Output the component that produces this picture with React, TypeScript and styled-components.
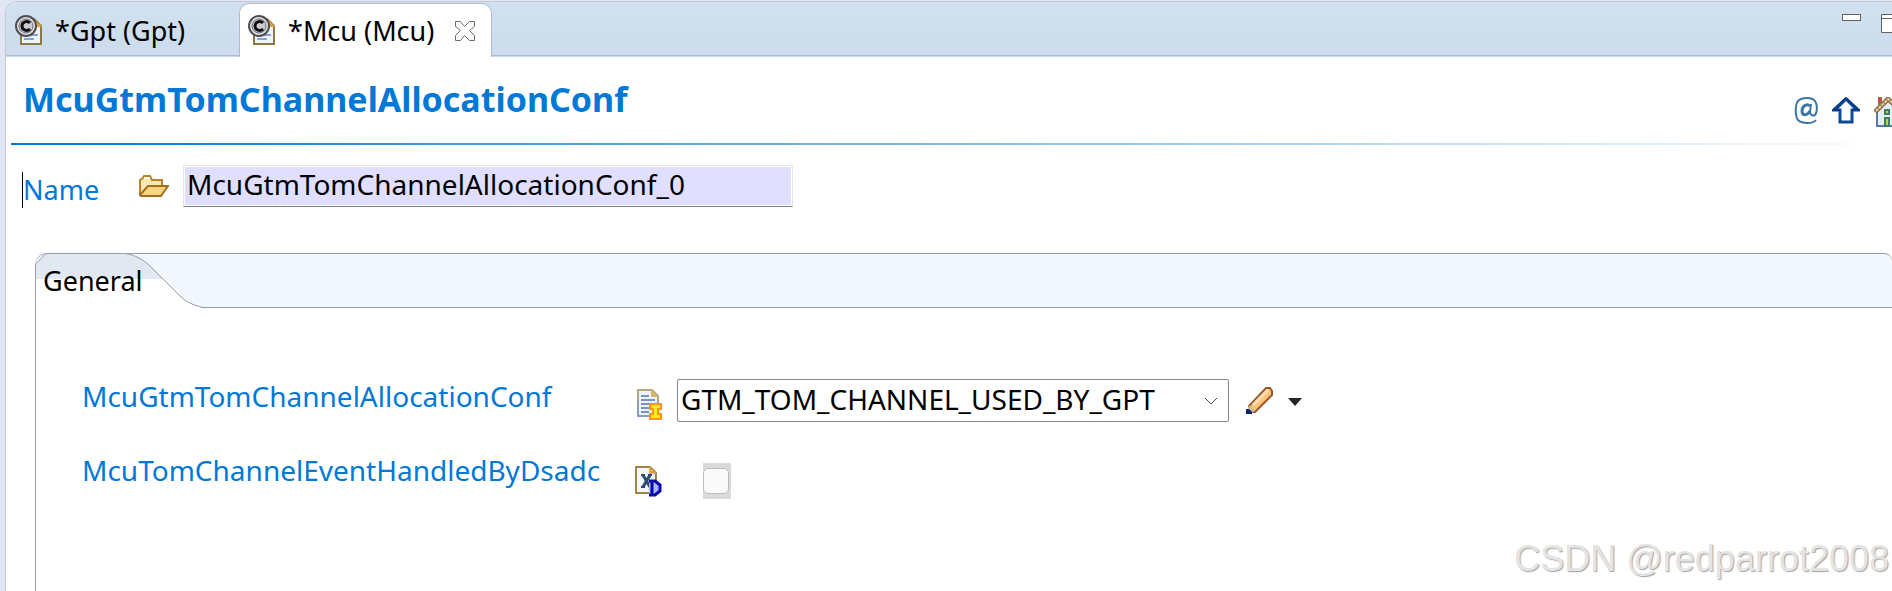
import React from "react";
import styled, { createGlobalStyle } from "styled-components";

const Global = createGlobalStyle`
  *, *::before, *::after { box-sizing: border-box; }
  html, body, #root { height: 100%; margin: 0; }
  body {
    background: #e0e6f6;
    color: #000;
    font-family: "Noto Sans", "Open Sans", sans-serif;
    font-size: 28px;
    line-height: 36px;
    overflow: hidden;
  }
  button, input, select { font: inherit; color: inherit; margin: 0; }
`;

const Editor = styled.main`
  position: relative;
  display: flex;
  flex-direction: column;
  min-height: calc(100vh - 1px);
  margin: 1px 0 0 5px;
  border: 1px solid #c6c9d0;
  border-width: 1px 0 0 1px;
  border-top-left-radius: 12px;
  background: #fff;
  overflow: hidden;
`;

const TabBar = styled.div`
  display: flex;
  height: 55px;
  border-bottom: 1px solid #c9d9e9;
  background: linear-gradient(#d2e1f0, #cddcec);
  box-shadow: inset 0 -1px #b1b9d2;
`;

const TabList = styled.div`
  display: flex;
  flex: 1;
`;

const Tab = styled.div<{ $active?: boolean }>`
  display: flex;
  align-items: center;
  width: ${(p) => (p.$active ? 253 : 233)}px;
  height: 54px;
  padding: 0 8px;
  margin-top: 1px;
  margin-bottom: -1px;
  border: 1px solid ${(p) => (p.$active ? "#b1b9d2" : "transparent")};
  border-bottom: 0;
  border-radius: 10px 10px 0 0;
  background: ${(p) => (p.$active ? "#fff" : "transparent")};
`;

const TabButton = styled.button`
  display: flex;
  align-items: center;
  gap: 12px;
  padding: 0;
  border: 0;
  background: none;
  font-size: 27px;
  white-space: nowrap;
`;

const IconButton = styled.button`
  display: block;
  padding: 0;
  border: 0;
  background: none;
  line-height: 0;
`;

const CloseButton = styled(IconButton)`
  margin-left: auto;
  margin-right: 8px;
`;

const WindowButtons = styled.div`
  display: flex;
  align-items: flex-start;
  gap: 20px;
  padding-top: 12px;
  margin-right: -8px;

  button { height: 20px; }
  svg { display: block; }
`;

const Header = styled.header`
  display: flex;
  align-items: center;
  justify-content: space-between;
  height: 86px;
  padding: 0 0 2px 17px;
`;

const Title = styled.h1`
  margin: 0;
  color: #0078d7;
  font-size: 34px;
  line-height: 48px;
  font-weight: 700;
`;

const HeaderTools = styled.div`
  display: flex;
  align-items: flex-start;
  gap: 14px;
  padding-top: 26px;
  margin-right: -12px;
`;

const Rule = styled.hr`
  width: 100%;
  height: 2px;
  margin: 0 0 0 5px;
  border: 0;
  background: linear-gradient(90deg, #0078d7, #fff);
`;

const Label = styled.label`
  color: #0078d7;
  white-space: nowrap;
`;

const NameRow = styled.div`
  display: flex;
  align-items: center;
  padding: 19px 0 0 16px;
`;

const NameLabel = styled(Label)`
  width: 117px;
  margin-top: 8px;
  border-left: 1px solid #000;
  font-size: 27px;
`;

const NameInput = styled.input`
  width: 610px;
  height: 42px;
  margin-left: 14px;
  padding: 0 3px 4px;
  border: 1px solid #e6e6e6;
  border-bottom-color: #858585;
  outline: 0;
  background: #e0dfff;
  box-shadow: inset 0 0 0 1px #fff;
`;

const Section = styled.section`
  display: flex;
  flex: 1;
  flex-direction: column;
  margin: 45px 0 0 29px;
`;

const SectionHead = styled.div`
  position: relative;
  height: 55px;
  border: 1px solid #999da3;
  border-width: 1px 0;
  border-radius: 12px 8px 0 0;
  background: #f3f7ff;
`;

const TabShape = styled.svg`
  position: absolute;
  left: 0;
  top: -1px;
`;

const SectionTab = styled.button`
  position: relative;
  padding: 9px 8px;
  border: 0;
  background: none;
  font-size: 27px;
`;

const SectionBody = styled.div`
  display: flex;
  flex: 1;
  flex-direction: column;
  gap: 30px;
  padding: 70px 0 0 46px;
  border-left: 1px solid #999da3;
`;

const Field = styled.div<{ $tall?: boolean }>`
  display: grid;
  grid-template-columns: 553px 42px 1fr;
  align-items: center;
  min-height: ${(p) => (p.$tall ? 58 : 44)}px;
`;

const FieldLabel = styled(Label)`
  align-self: start;
`;

const IconCell = styled.div<{ $low?: boolean }>`
  display: flex;
  justify-content: flex-end;
  width: 27px;
  padding-top: ${(p) => (p.$low ? 8 : 0)}px;
`;

const Control = styled.div`
  display: flex;
  align-items: center;
`;

const SelectBox = styled.div`
  position: relative;
  width: 552px;
  height: 43px;
`;

const Select = styled.select`
  width: 100%;
  height: 100%;
  padding: 0 40px 2px 3px;
  border: 1px solid #858585;
  border-radius: 2px;
  appearance: none;
  background: #fff;
`;

const Chevron = styled.svg`
  position: absolute;
  right: 11px;
  top: 18px;
  pointer-events: none;
`;

const Tools = styled.div`
  display: flex;
  align-items: center;
  gap: 15px;
  margin-left: 17px;
`;

const CheckFrame = styled.div`
  display: flex;
  width: 28px;
  height: 36px;
  margin-left: 26px;
  padding-top: 5px;
  background: #dadada;
`;

const Check = styled.input`
  appearance: none;
  width: 26px;
  height: 26px;
  border: 1px solid #bcbcbc;
  border-radius: 5px;
  background: #fafafa;
`;

const Watermark = styled.div`
  position: absolute;
  right: 3px;
  bottom: 10px;
  color: #e4e4e4;
  font-family: "Liberation Sans", Arial, sans-serif;
  font-size: 36px;
  line-height: 44px;
  text-shadow: 1px 1px 1px #a2a2a2;
`;

const ConfigIcon = () => (
  <svg width="28" height="31" viewBox="0 0 28 31" aria-hidden="true">
    <path d="M6 4H19L26 11V29H6Z" fill="#eef4fb" stroke="#8c7a45" strokeWidth="2" />
    <path d="M18 3L27 12H18Z" fill="#e2a63c" />
    <path d="M12 20H23M9 24H19" stroke="#8aa3d0" strokeWidth="2" />
    <circle cx="11" cy="11" r="10" fill="#e3e4e8" stroke="#4d4f54" strokeWidth="2" />
    <circle cx="11" cy="11" r="7" fill="#c9cbd0" stroke="#6a6c70" />
    <path d="M15 8C12 5 7 7 7 11S12 17 15 14" fill="none" stroke="#111" strokeWidth="3" />
  </svg>
);

const CloseIcon = () => (
  <svg width="20" height="20" viewBox="0 0 20 20" aria-hidden="true">
    <path d="M.5 .5H5.5L9.5 5.5L14.5 .5H19.5V5.5L14.5 9.5L19.5 14.5V19.5H14.5L9.5 14.5L5.5 19.5H.5V14.5L5.5 9.5L.5 5.5Z" fill="#fff" stroke="#6c6c6c" />
  </svg>
);

const MinimizeIcon = () => (
  <svg width="19" height="20" aria-hidden="true">
    <rect x=".5" y=".5" width="18" height="6" fill="#fff" stroke="#626262" />
  </svg>
);

const MaximizeIcon = () => (
  <svg width="19" height="20" aria-hidden="true">
    <path d="M.5 .5H18.5V18.5H.5ZM.5 4.5H18.5" fill="#fff" stroke="#626262" />
  </svg>
);

const AtIcon = () => (
  <svg width="24" height="28" viewBox="0 0 24 28" aria-hidden="true">
    <g fill="none" stroke="#3c76a3" strokeWidth="2">
      <path d="M22 23C19 27 8 27 4 23C1 19 1 8 4 4C8 0 18 0 21 4C24 8 23 16 21 18C19 19 16 18 16 15L17 7" />
      <path d="M16 9C13 6 8 9 8 14C8 19 13 19 16 14" strokeWidth="3" />
    </g>
  </svg>
);

const UpIcon = () => (
  <svg width="28" height="27" viewBox="0 0 28 27" aria-hidden="true">
    <path d="M14 2L25 13H20V25H8V13H3Z" fill="#fff" stroke="#0a4a97" strokeWidth="3" />
    <path d="M14 1L1 13H8M14 1L27 13H20" fill="none" stroke="#063a85" strokeWidth="2" />
  </svg>
);

const HomeIcon = () => (
  <svg width="30" height="30" viewBox="0 0 30 30" aria-hidden="true">
    <path d="M3 13L14 3L27 13V29H3Z" fill="#e6eff9" stroke="#5778b2" strokeWidth="2" />
    <path d="M4 0H8V8H4Z" fill="#b4584a" />
    <path d="M1 15L14 2L29 15" fill="none" stroke="#8c7350" strokeWidth="5" />
    <path d="M2 14L14 2L28 14" fill="none" stroke="#f1d19b" strokeWidth="2" strokeDasharray="3 1" />
    <path d="M10 12H16V18H10ZM10 20H16V30H10Z" fill="#3f7d63" />
    <path d="M12 14H14V16H12ZM12 22H14V28H12Z" fill="#c7d817" />
  </svg>
);

const FolderIcon = () => (
  <svg width="30" height="23" viewBox="0 0 30 23" aria-hidden="true">
    <path d="M1 20V5L4 3L5 1H11L13 5H23V10" fill="#fbe9b0" stroke="#b9832c" strokeWidth="2" />
    <path d="M1 20L9 11H29L22 21H2Z" fill="#f9d583" stroke="#a76d1e" strokeWidth="2" />
    <path d="M5 3H11" stroke="#fff" strokeWidth="2" />
  </svg>
);

const EnumIcon = () => (
  <svg width="25" height="31" viewBox="0 0 25 31" aria-hidden="true">
    <defs>
      <linearGradient id="sheet" x2="0" y2="1">
        <stop stopColor="#b4a878" />
        <stop offset="1" stopColor="#8599c8" />
      </linearGradient>
    </defs>
    <path d="M1 1H15L21 7V27H1Z" fill="#edf3fc" stroke="url(#sheet)" strokeWidth="2" />
    <path d="M14 0L22 8H14Z" fill="#d6b565" />
    <path d="M4 7H12M4 11H18M4 15H14M4 19H14M4 23H12" stroke="#7b92c0" strokeWidth="2" />
    <path d="M13 15H24V20H21V25H24V30H13V25H16V20H13Z" fill="#ffe923" stroke="#ff9800" strokeWidth="2" />
  </svg>
);

const BoolIcon = () => (
  <svg width="27" height="31" viewBox="2 0 27 31" aria-hidden="true">
    <path d="M3 1H17L23 7V27H3Z" fill="#f2f7fd" stroke="#a08440" strokeWidth="2" />
    <path d="M16 0L24 8H16Z" fill="#d9a94e" />
    <path d="M8 9H12M15 9H19M8 21H12" fill="none" stroke="#2f4a6b" strokeWidth="2" />
    <path d="M10 9L17 21M17 9L10 21" fill="none" stroke="#2f4a6b" strokeWidth="3" />
    <path d="M16 15H22L27 19V25L22 29H16M19 15V29" fill="#a9b3ff" stroke="#0a0aa8" strokeWidth="3" />
  </svg>
);

const PencilIcon = () => (
  <svg width="27" height="29" viewBox="0 0 27 29" aria-hidden="true">
    <path d="M3 20L20 2H24L26 5V9L9 26H5Z" fill="#ffc27c" stroke="#9c5a2c" strokeWidth="2" />
    <path d="M7 19L22 4" stroke="#ffe0b5" strokeWidth="3" />
    <path d="M3 19L9 25L5 27H2Z" fill="#c9b98b" />
    <path d="M0 23H3L6 26V28H0Z" fill="#0b2369" />
  </svg>
);

const DropIcon = () => (
  <svg width="14" height="8" aria-hidden="true">
    <path d="M0 0H14L7 8Z" fill="#262626" />
  </svg>
);

export default function App() {
  return (
    <>
      <Global />
      <Editor>
        <TabBar>
          <TabList role="tablist">
            <Tab>
              <TabButton role="tab" aria-selected="false">
                <ConfigIcon />
                *Gpt (Gpt)
              </TabButton>
            </Tab>
            <Tab $active>
              <TabButton role="tab" aria-selected="true">
                <ConfigIcon />
                *Mcu (Mcu)
              </TabButton>
              <CloseButton aria-label="Close"><CloseIcon /></CloseButton>
            </Tab>
          </TabList>
          <WindowButtons>
            <IconButton aria-label="Minimize"><MinimizeIcon /></IconButton>
            <IconButton aria-label="Maximize"><MaximizeIcon /></IconButton>
          </WindowButtons>
        </TabBar>
        <Header>
          <Title>McuGtmTomChannelAllocationConf</Title>
          <HeaderTools>
            <IconButton aria-label="Annotations"><AtIcon /></IconButton>
            <IconButton aria-label="Up"><UpIcon /></IconButton>
            <IconButton aria-label="Home"><HomeIcon /></IconButton>
          </HeaderTools>
        </Header>
        <Rule />
        <NameRow>
          <NameLabel htmlFor="name">Name</NameLabel>
          <FolderIcon />
          <NameInput id="name" defaultValue="McuGtmTomChannelAllocationConf_0" />
        </NameRow>
        <Section>
          <SectionHead>
            <TabShape width="170" height="55" aria-hidden="true">
              <path d="M.5 55V11L11 .5H90C100 2 107 6 114 12L145 43C151 49 158 52 168 55Z" fill="#fff" />
              <path d="M.5 26V11L11 .5H90C100 2 107 6 114 12L128 26Z" fill="#e1e8f1" />
              <path d="M.5 55V11L11 .5H90C100 2 107 6 114 12L145 43C151 49 158 52 168 54.5" fill="none" stroke="#999da3" />
            </TabShape>
            <SectionTab>General</SectionTab>
          </SectionHead>
          <SectionBody>
            <Field>
              <FieldLabel htmlFor="conf">McuGtmTomChannelAllocationConf</FieldLabel>
              <IconCell $low><EnumIcon /></IconCell>
              <Control>
                <SelectBox>
                  <Select id="conf">
                    <option>GTM_TOM_CHANNEL_USED_BY_GPT</option>
                  </Select>
                  <Chevron width="14" height="9" aria-hidden="true">
                    <path d="M1 1L7 7L13 1" fill="none" stroke="#444" strokeWidth="1" />
                  </Chevron>
                </SelectBox>
                <Tools>
                  <IconButton aria-label="Edit"><PencilIcon /></IconButton>
                  <IconButton aria-label="Edit options"><DropIcon /></IconButton>
                </Tools>
              </Control>
            </Field>
            <Field $tall>
              <FieldLabel htmlFor="dsadc">McuTomChannelEventHandledByDsadc</FieldLabel>
              <IconCell><BoolIcon /></IconCell>
              <Control>
                <CheckFrame>
                  <Check id="dsadc" type="checkbox" />
                </CheckFrame>
              </Control>
            </Field>
          </SectionBody>
        </Section>
        <Watermark>CSDN @redparrot2008</Watermark>
      </Editor>
    </>
  );
}
